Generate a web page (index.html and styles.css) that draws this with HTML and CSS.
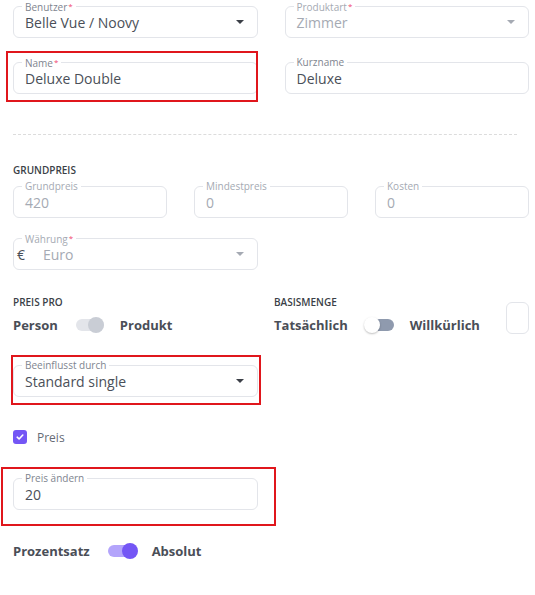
FILE: index.html
```html
<!DOCTYPE html>
<html lang="de">
<head>
<meta charset="utf-8">
<title>Produkt</title>
<link rel="stylesheet" href="styles.css">
</head>
<body>
<div class="form">
  <div class="row two">
    <div class="field">
      <span class="label">Benutzer<span class="req">*</span></span>
      <span class="value">Belle Vue / Noovy</span>
      <span class="caret"></span>
    </div>
    <div class="field disabled">
      <span class="label">Produktart<span class="req">*</span></span>
      <span class="value">Zimmer</span>
      <span class="caret"></span>
    </div>
  </div>

  <div class="row two row-name">
    <div class="field hl hl-name">
      <span class="label">Name<span class="req">*</span></span>
      <span class="value">Deluxe Double</span>
    </div>
    <div class="field">
      <span class="label">Kurzname</span>
      <span class="value">Deluxe</span>
    </div>
  </div>

  <div class="divider"></div>

  <div class="heading h-grund">Grundpreis</div>
  <div class="row three">
    <div class="field disabled">
      <span class="label">Grundpreis</span>
      <span class="value">420</span>
    </div>
    <div class="field disabled">
      <span class="label">Mindestpreis</span>
      <span class="value">0</span>
    </div>
    <div class="field disabled">
      <span class="label">Kosten</span>
      <span class="value">0</span>
    </div>
  </div>

  <div class="row two row-currency">
    <div class="field disabled currency">
      <span class="label">Währung<span class="req">*</span></span>
      <span class="euro">€</span>
      <span class="value">Euro</span>
      <span class="caret"></span>
    </div>
  </div>

  <div class="row options">
    <div class="option">
      <div class="heading">Preis pro</div>
      <div class="switch-row">
        <span class="sw-text">Person</span>
        <span class="switch sw-gray"><span class="knob"></span></span>
        <span class="sw-text">Produkt</span>
      </div>
    </div>
    <div class="option option-split">
      <div>
        <div class="heading">Basismenge</div>
        <div class="switch-row">
          <span class="sw-text">Tatsächlich</span>
          <span class="switch sw-off"><span class="knob"></span></span>
          <span class="sw-text">Willkürlich</span>
        </div>
      </div>
      <span class="mini-box"></span>
    </div>
  </div>

  <div class="row two row-affect">
    <div class="field hl hl-affect">
      <span class="label">Beeinflusst durch</span>
      <span class="value">Standard single</span>
      <span class="caret"></span>
    </div>
  </div>

  <div class="check-row">
    <span class="checkbox">
      <svg width="10" height="10" viewBox="0 0 10 10"><path d="M2.2 5.2 L4.1 7 L7.8 3" fill="none" stroke="#fff" stroke-width="1.6" stroke-linecap="round" stroke-linejoin="round"/></svg>
    </span>
    <span class="check-label">Preis</span>
  </div>

  <div class="row two row-change">
    <div class="field hl hl-change">
      <span class="label">Preis ändern</span>
      <span class="value">20</span>
    </div>
  </div>

  <div class="switch-row last">
    <span class="sw-text">Prozentsatz</span>
    <span class="switch sw-on"><span class="knob"></span></span>
    <span class="sw-text">Absolut</span>
  </div>
</div>
</body>
</html>
```

FILE: styles.css
```css
* { box-sizing: border-box; }
html, body { margin: 0; padding: 0; background: #fff; }
body {
  font-family: "Open Sans", "Liberation Sans", sans-serif;
  color: #3b3f47;
}
.form {
  padding: 6px 6px 0 13px;
  display: flex;
  flex-direction: column;
}
.row { display: grid; column-gap: 27px; }
.row.two { grid-template-columns: 1fr 1fr; }
.row.three { grid-template-columns: 1fr 1fr 1fr; }
.row-name { margin-top: 24px; }
.row-currency { margin-top: 20px; }
.row-affect { margin-top: 28px; }

.field {
  position: relative;
  height: 32px;
  border: 1px solid #e3e5ea;
  border-radius: 6px;
  display: flex;
  align-items: center;
  padding: 0 11px;
}
.label {
  position: absolute;
  top: -7px;
  left: 8px;
  padding: 0 3px;
  background: #fff;
  font-size: 10px;
  line-height: 12px;
  color: #80858f;
}
.req { color: #ef476f; font-size: 8px; vertical-align: 2px; margin-left: 1px; }
.value {
  font-size: 14px;
  color: #4a4f58;
  flex: 1;
  white-space: nowrap;
}
.disabled .value, .disabled .label { color: #a5aab3; }
.caret {
  width: 0; height: 0;
  border-left: 4px solid transparent;
  border-right: 4px solid transparent;
  border-top: 4px solid #3b3f47;
  margin-right: 2px;
}
.disabled .caret { border-top-color: #a5aab3; }
.currency { padding-left: 3px; }
.euro { font-size: 14px; color: #4a4f58; width: 26px; }

.hl::after {
  content: "";
  position: absolute;
  border: 2px solid #e0161c;
  pointer-events: none;
}
.hl-name::after { top: -12px; left: -8px; right: -1px; bottom: -9px; }
.hl-affect::after { top: -11px; left: -3px; right: -4px; bottom: -9px; }
.hl-change::after { top: -12px; left: -13px; right: -19px; bottom: -17px; }

.divider {
  margin: 40px 12px 0 0;
  height: 0;
  border-top: 1px dashed #dcdcdc;
}
.heading {
  font-size: 10px;
  font-weight: 600;
  text-transform: uppercase;
  color: #3b3f47;
  line-height: 12px;
}
.h-grund { margin-top: 29px; margin-bottom: 10px; }

.options {
  grid-template-columns: 261px 1fr;
  column-gap: 0;
  margin-top: 26px;
}
.option .heading { margin-bottom: 5px; }
.option-split {
  display: flex;
  justify-content: space-between;
  align-items: flex-start;
}
.switch-row {
  display: flex;
  align-items: center;
  height: 24px;
}
.sw-text { font-size: 13px; font-weight: 700; color: #4a4e57; }
.switch {
  position: relative;
  width: 28px;
  height: 12px;
  border-radius: 6px;
  margin: 0 16px 0 18px;
}
.knob {
  position: absolute;
  top: -2px;
  width: 16px;
  height: 16px;
  border-radius: 50%;
}
.sw-gray { background: #e3e5ea; }
.sw-gray .knob { right: 0; background: #c9cdd5; }
.sw-off { background: #8f9aae; }
.sw-off .knob { left: -2px; background: #fff; box-shadow: 0 1px 2px rgba(0,0,0,0.25); }
.sw-on { background: #b3a4fb; }
.sw-on .knob { right: -2px; background: #7456f5; }
.mini-box {
  width: 23px;
  height: 32px;
  border: 1px solid #e3e5ea;
  border-radius: 6px;
  margin-top: 6px;
}

.check-row {
  display: flex;
  align-items: center;
  margin-top: 33px;
  height: 14px;
}
.checkbox {
  width: 14px; height: 14px;
  border-radius: 3px;
  background: #7456f5;
  display: flex; align-items: center; justify-content: center;
}
.check-label { margin-left: 10px; font-size: 12px; color: #666b75; }
.row-change { margin-top: 34px; }
.last { margin-top: 29px; }
```
